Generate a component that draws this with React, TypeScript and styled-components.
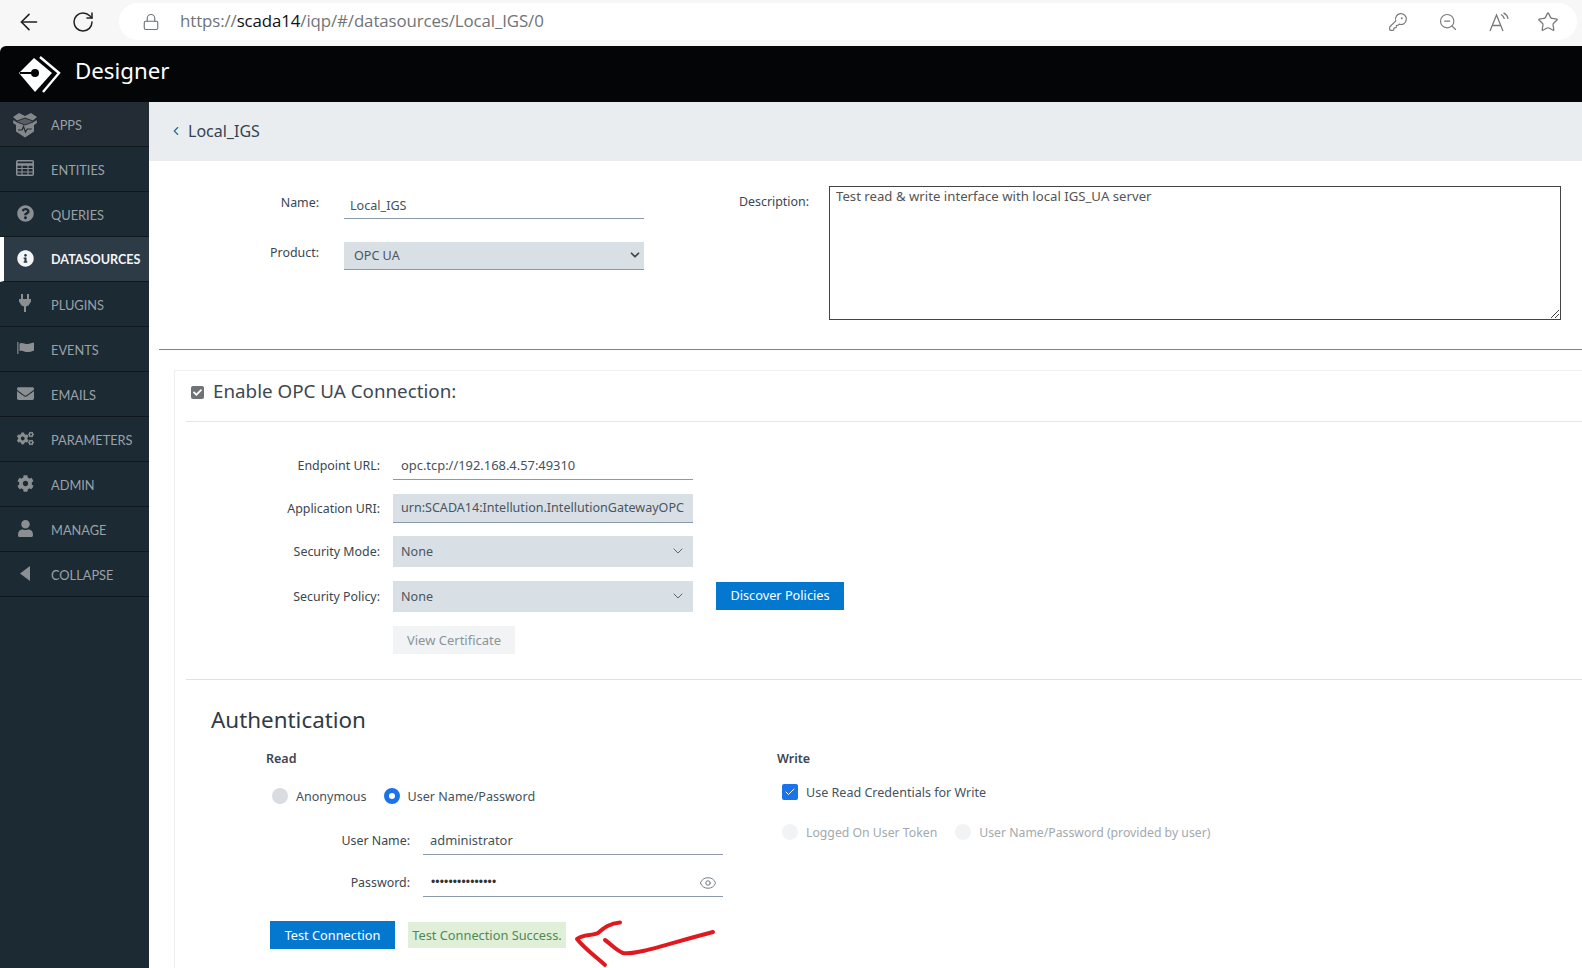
import React from "react";
import styled, { createGlobalStyle } from "styled-components";
import { FaQuestionCircle, FaInfoCircle, FaEnvelope, FaCogs, FaCog, FaUser, FaCheck } from "react-icons/fa";
import { ArrowLeft, RotateCw, Lock, KeyRound, ZoomOut, Star, ChevronDown, ChevronLeft, Eye, Check } from "lucide-react";

const Global = createGlobalStyle`
  html, body { margin: 0; padding: 0; width: 1582px; height: 968px; overflow: hidden; background: #fff; }
  body { font-family: "Noto Sans", "Open Sans", sans-serif; color: #333; }
  * { box-sizing: border-box; }
`;

const Page = styled.div`
  width: 1582px; height: 968px; display: flex; flex-direction: column; overflow: hidden; background: #f7f7f7;
`;
const BrowserBar = styled.div`
  height: 46px; flex: none; display: flex; align-items: flex-start; padding: 3px 5px 0 0; background: #f7f7f7;
`;
const NavButton = styled.div<{ $w: number }>`
  width: ${p => p.$w}px; height: 37px; flex: none; display: flex; align-items: center; justify-content: center; color: #222;
`;
const AddressPill = styled.div`
  flex: 1; height: 37px; border-radius: 19px; background: #fff; display: flex; align-items: center; padding: 0 18px 0 23px; color: #6d7278;
`;
const UrlText = styled.div`
  flex: 1; margin-left: 20px; margin-top: -2px; font-family: "Open Sans", sans-serif; font-size: 16.85px; color: #6f7479; white-space: nowrap; letter-spacing: -0.1px;
  b { font-weight: 400; color: #111; }
`;
const PillIcons = styled.div`
  display: flex; align-items: center; gap: 30px; color: #7a7a7a;
`;
const ReadAloud = styled.svg`
  width: 22px; height: 20px; display: block;
`;
const StarSlot = styled.span`
  display: flex; margin-left: -3px;
`;
const Shell = styled.div`
  flex: 1; min-height: 0; display: flex; flex-direction: column; background: #fff; border-top-left-radius: 6px; overflow: hidden;
`;
const Header = styled.header`
  height: 56px; flex: none; background: #030507; display: flex; align-items: center; padding-left: 18px; gap: 13px; color: #fff;
`;
const Brand = styled.span`
  font-size: 22.3px; font-family: "Noto Sans", sans-serif; margin-bottom: 8px;
`;
const Logo = styled.svg`
  width: 44px; height: 38px; display: block; flex: none; margin-top: 2px;
`;
const Body = styled.div`
  flex: 1; min-height: 0; display: flex;
`;
const Sidebar = styled.nav`
  width: 149px; flex: none; background: #1c2a34; display: flex; flex-direction: column;
`;
const NavItem = styled.div<{ $active?: boolean; $top?: boolean }>`
  height: 45px; flex: none; display: flex; align-items: center; padding-top: 1px; padding-left: ${p => (p.$active ? 11 : 15)}px;
  border-left: ${p => (p.$active ? "4px solid #fff" : "none")};
  border-bottom: 1px solid #10181e;
  background: ${p => (p.$active ? "#2d3b47" : p.$top ? "#232c34" : "#1c2a34")};
  color: ${p => (p.$active ? "#f2f4f6" : "#9aa2a8")};
  font-family: Lato, sans-serif; font-size: ${p => (p.$active ? 12.6 : 12.8)}px; font-weight: ${p => (p.$active ? 700 : 400)};
`;
const NavIcon = styled.span<{ $active?: boolean }>`
  width: 20px; height: 20px; flex: none; margin-right: 16px; display: flex; align-items: center; justify-content: center;
  color: ${p => (p.$active ? "#f2f4f6" : "#8b8f92")}; font-size: 17px; margin-top: -3px;
`;
const IconSvg = styled.svg<{ $w: number; $h: number; $mt?: number }>`
  width: ${p => p.$w}px; height: ${p => p.$h}px; flex: none; display: block; margin-top: ${p => p.$mt ?? 0}px;
`;
const Main = styled.main`
  flex: 1; min-width: 0; display: flex; flex-direction: column; background: #fff;
`;
const Crumb = styled.div`
  height: 59px; flex: none; background: #e9edf0; display: flex; align-items: center; padding: 0 0 2px 20px; gap: 5px; color: #33434f; font-size: 16px;
  svg { color: #1f6d93; }
`;
const TopForm = styled.section`
  height: 188px; flex: none; display: flex; padding-top: 27px;
`;
const TopLeft = styled.div`
  width: 495px; flex: none; display: flex; flex-direction: column;
`;
const TopRow = styled.div<{ $gap?: number }>`
  display: flex; align-items: flex-start; margin-top: ${p => p.$gap ?? 0}px;
`;
const Label = styled.label<{ $w: number; $nudge?: number }>`
  width: ${p => p.$w}px; flex: none; text-align: right; font-size: 12.4px; color: #3a4650; white-space: nowrap; padding-top: ${p => p.$nudge ?? 0}px;
`;
const UnderInput = styled.div<{ $w?: number; $ml?: number; $h?: number; $size?: number; $pt?: number; $pl?: number }>`
  width: ${p => p.$w ?? 300}px; margin-left: ${p => p.$ml ?? 0}px; height: ${p => p.$h ?? 30}px; flex: none; display: flex; align-items: center;
  padding: ${p => p.$pt ?? 0}px 7px 0 ${p => p.$pl ?? 7}px; border-bottom: 1px solid #8a9aa8; font-size: ${p => p.$size ?? 12.9}px; color: #45525c; background: #fff; position: relative;
`;
const SelectBox = styled.div<{ $w?: number; $ml?: number; $h: number; $line?: boolean; $pl?: number; $pr?: number; $pb?: number; $size?: number }>`
  width: ${p => p.$w ?? 300}px; margin-left: ${p => p.$ml ?? 0}px; height: ${p => p.$h}px; flex: none; display: flex; align-items: center; justify-content: space-between;
  padding: 0 ${p => p.$pr ?? 7}px ${p => p.$pb ?? 1}px ${p => p.$pl ?? 8}px; background: #d8dfe5; font-size: ${p => p.$size ?? 12.55}px; color: #4a5660; white-space: nowrap;
  border-bottom: ${p => (p.$line ? "1px solid #8a9aa8" : "none")};
`;
const DescWrap = styled.div`
  display: flex; align-items: flex-start; margin-top: -2px;
`;
const TextBox = styled.div`
  width: 732px; height: 134px; margin-left: 20px; border: 1px solid #444; padding: 0 6px; font-size: 13.2px; line-height: 18px; color: #555; flex: none; position: relative;
`;
const Grip = styled.svg`
  position: absolute; right: 1px; bottom: 1px; width: 9px; height: 9px;
`;
const Rule = styled.hr`
  margin: 0 0 0 10px; height: 1px; border: 0; background: #7f8386; flex: none;
`;
const Card = styled.section`
  flex: 1; margin: 20px -10px 0 25px; border: 1px solid #eceef0; border-bottom: 0; background: #fff; padding: 0 0 0 11px; display: flex; flex-direction: column; min-height: 0;
`;
const EnableRow = styled.div`
  height: 51px; flex: none; display: flex; align-items: center; gap: 9px; padding: 0 0 7px 5px; border-bottom: 1px solid #e3e6e8;
  font-size: 18.8px; color: #3c4852;
`;
const EnableText = styled.span`
  margin-bottom: 3px;
`;
const GreyCheck = styled.span`
  width: 13px; height: 13px; border-radius: 2px; background: #6f7376; flex: none; display: flex; align-items: center; justify-content: center; color: #fff; font-size: 9px;
`;
const Connection = styled.div`
  height: 258px; flex: none; padding-top: 28px; border-bottom: 1px solid #dfe2e4; display: flex; flex-direction: column;
`;
const FieldRow = styled.div<{ $mt?: number }>`
  display: flex; align-items: center; margin-top: ${p => p.$mt ?? 0}px;
`;
const BlueButton = styled.div<{ $w: number; $h: number; $ml?: number; $mt?: number; $pb?: number }>`
  width: ${p => p.$w}px; height: ${p => p.$h}px; margin-left: ${p => p.$ml ?? 0}px; margin-top: ${p => p.$mt ?? 0}px; flex: none; background: #0477cf; color: #fff; font-size: 12.75px;
  display: flex; align-items: center; justify-content: center; padding-bottom: ${p => p.$pb ?? 1}px;
`;
const GhostButton = styled.div`
  width: 122px; height: 28px; margin: 14px 0 0 207px; padding-bottom: 1px; background: #f1f3f4; color: #8c949a; font-size: 13px; display: flex; align-items: center; justify-content: center;
`;
const AuthTitle = styled.h2`
  margin: 0; padding: 25px 0 0 25px; font-size: 22.4px; line-height: 30px; font-weight: 400; color: #2f3b45;
`;
const Columns = styled.div`
  display: flex; margin-top: 15px;
`;
const ReadCol = styled.div`
  width: 591px; flex: none; padding-left: 80px; position: relative;
`;
const WriteCol = styled.div`
  flex: 1; min-width: 0;
`;
const SubHead = styled.div`
  font-size: 12.5px; line-height: 18px; font-weight: 600; color: #3a4650;
`;
const RadioRow = styled.div<{ $ml?: number; $mt?: number }>`
  display: flex; align-items: center; margin-left: ${p => p.$ml ?? 0}px; margin-top: ${p => p.$mt ?? 0}px; height: 16px;
`;
const Radio = styled.span<{ $on?: boolean; $faint?: boolean; $ml?: number }>`
  width: 16px; height: 16px; border-radius: 50%; flex: none; margin-left: ${p => p.$ml ?? 0}px;
  background: ${p => (p.$on ? "#fff" : p.$faint ? "#f2f3f5" : "#d9dde2")};
  border: ${p => (p.$on ? "5px solid #1a73e8" : "none")};
`;
const Option = styled.span<{ $faint?: boolean }>`
  margin-left: 8px; font-size: ${p => (p.$faint ? 12.25 : 12.55)}px; color: ${p => (p.$faint ? "#a3a9ae" : "#46525c")}; white-space: nowrap;
`;
const BlueCheck = styled.span`
  width: 16px; height: 16px; border-radius: 2px; background: #1a73e8; color: #fff; display: flex; align-items: center; justify-content: center; flex: none;
`;
const EyeBtn = styled.span`
  position: absolute; right: 6px; top: 7px; color: #6e7a84; display: flex;
`;
const Dots = styled.span`
  font-size: 12px; letter-spacing: 0.15px; color: #333; font-family: "Liberation Sans", sans-serif; margin-left: 1px;
`;
const ActionRow = styled.div`
  display: flex; align-items: center; margin: 24px 0 0 -80px; padding-left: 84px; position: relative;
`;
const Success = styled.div`
  width: 158px; height: 26px; margin-left: 13px; background: #e0efd8; color: #4f8a55; font-size: 12.8px; display: flex; align-items: center; justify-content: center; white-space: nowrap;
`;
const Arrow = styled.svg`
  position: absolute; left: 384px; top: -11px; width: 160px; height: 58px; overflow: visible;
`;

const AppsIcon = () => (
  <IconSvg $w={26} $h={26} $mt={4} viewBox="0 0 26 26" fill="#85888a">
    <path d="M7 1 13 4 19 1 25 5 21 8.5 13 5.5 5 8.5 1 5Z" />
    <path d="M5 9.5 13 6.5 21 9.5 13 12.5Z" fill="#85888a" opacity=".55" />
    <path d="M1.5 8 5 10.5 13 13.5 21 10.5 24.5 8 25 11 22 13V19.5L13 25.5 4 19.5V13L1 11Z" />
    <path d="M6 18h4l1.5-3.5 2 5.5 1.8-3h4.5" fill="none" stroke="#232c34" strokeWidth="1.2" />
  </IconSvg>
);
const TableIcon = () => (
  <IconSvg $w={18} $h={16} viewBox="0 0 18 16" fill="none" stroke="currentColor">
    <rect x="0.75" y="0.75" width="16.5" height="14.5" rx="1" strokeWidth="1.5" />
    <path d="M0 4.5h18" strokeWidth="2.6" />
    <path d="M0 8.5h18M0 12h18M6 4v12M12 4v12" strokeWidth="1.1" />
  </IconSvg>
);
const PlugIcon = () => (
  <IconSvg $w={12} $h={18} viewBox="0 0 12 18" fill="currentColor">
    <rect x="2" y="0" width="2" height="5" />
    <rect x="8" y="0" width="2" height="5" />
    <path d="M0 5h12v2.5L9.5 11.5 7 12.5V18H5V12.5L2.5 11.5 0 7.5Z" />
  </IconSvg>
);
const FlagIcon = () => (
  <IconSvg $w={17} $h={12} viewBox="0 0 17 12" fill="currentColor">
    <rect x="0" y="0" width="1.6" height="12" opacity=".7" />
    <path d="M2.5 1.5C5.5-.2 8 2.6 11 2 12.8 1.7 15 1 17 .5V8.5C14.5 9.5 12.5 10 10.5 10 7.5 10 5.5 7.8 2.5 9Z" />
  </IconSvg>
);
const CollapseIcon = () => (
  <IconSvg $w={10} $h={15} viewBox="0 0 10 15" fill="currentColor">
    <path d="M10 0V15L0 7.5Z" />
  </IconSvg>
);

const items: { key: string; icon: React.ReactNode }[] = [
  { key: "APPS", icon: <AppsIcon /> },
  { key: "ENTITIES", icon: <TableIcon /> },
  { key: "QUERIES", icon: <FaQuestionCircle /> },
  { key: "DATASOURCES", icon: <FaInfoCircle /> },
  { key: "PLUGINS", icon: <PlugIcon /> },
  { key: "EVENTS", icon: <FlagIcon /> },
  { key: "EMAILS", icon: <FaEnvelope /> },
  { key: "PARAMETERS", icon: <FaCogs /> },
  { key: "ADMIN", icon: <FaCog /> },
  { key: "MANAGE", icon: <FaUser /> },
  { key: "COLLAPSE", icon: <CollapseIcon /> },
];

export default function App() {
  return (
    <Page>
      <Global />
      <BrowserBar>
        <NavButton $w={58}><ArrowLeft size={26} strokeWidth={1.5} /></NavButton>
        <NavButton $w={50}><RotateCw size={24} strokeWidth={1.5} /></NavButton>
        <NavButton $w={11} />
        <AddressPill>
          <Lock size={18} strokeWidth={1.5} />
          <UrlText>https://<b>scada14</b>/iqp/#/datasources/Local_IGS/0</UrlText>
          <PillIcons>
            <KeyRound size={20} strokeWidth={1.4} />
            <ZoomOut size={20} strokeWidth={1.4} />
            <ReadAloud viewBox="0 0 22 20" fill="none" stroke="currentColor" strokeWidth="1.3">
              <path d="M2 19 8.5 3 15 19M4.5 13.5h8" />
              <path d="M13 2.5c2 1 3 2.4 3.4 4.5M15.5.8c2.5 1.2 4 3.2 4.6 6" />
            </ReadAloud>
            <StarSlot><Star size={22} strokeWidth={1.4} /></StarSlot>
          </PillIcons>
        </AddressPill>
      </BrowserBar>
      <Shell>
        <Header>
          <Logo viewBox="0 0 44 38">
            <path d="M16 2 34 17 17 36 1 17Z" fill="#fff" />
            <path d="M2 17h13" stroke="#030507" strokeWidth="2.2" />
            <circle cx="17" cy="17" r="4" fill="#030507" />
            <path d="M22 1 41 17 25 36" stroke="#fff" strokeWidth="2.4" fill="none" />
          </Logo>
          <Brand>Designer</Brand>
        </Header>
        <Body>
          <Sidebar>
            {items.map((it, i) => (
              <NavItem key={it.key} $active={it.key === "DATASOURCES"} $top={i === 0}>
                <NavIcon $active={it.key === "DATASOURCES"}>{it.icon}</NavIcon>
                {it.key}
              </NavItem>
            ))}
          </Sidebar>
          <Main>
            <Crumb><ChevronLeft size={14} strokeWidth={2} />Local_IGS</Crumb>
            <TopForm>
              <TopLeft>
                <TopRow>
                  <Label $w={170} $nudge={6}>Name:</Label>
                  <UnderInput $ml={25} $h={31} $size={12.6} $pt={4} $pl={6}>Local_IGS</UnderInput>
                </TopRow>
                <TopRow $gap={23}>
                  <Label $w={170} $nudge={2}>Product:</Label>
                  <SelectBox $ml={25} $h={28} $line $pl={10} $pr={2}>OPC UA<ChevronDown size={14} strokeWidth={3} color="#444" /></SelectBox>
                </TopRow>
              </TopLeft>
              <DescWrap>
                <Label $w={165} $nudge={7}>Description:</Label>
                <TextBox>
                  Test read &amp; write interface with local IGS_UA server
                  <Grip viewBox="0 0 9 9" stroke="#444" strokeWidth="1"><path d="M1 9 9 1M5 9 9 5" /></Grip>
                </TextBox>
              </DescWrap>
            </TopForm>
            <Rule />
            <Card>
              <EnableRow>
                <GreyCheck><FaCheck /></GreyCheck>
                <EnableText>Enable OPC UA Connection:</EnableText>
              </EnableRow>
              <Connection>
                <FieldRow>
                  <Label $w={194}>Endpoint URL:</Label>
                  <UnderInput $ml={13} $h={30} $pt={1} $pl={8}>opc.tcp://192.168.4.57:49310</UnderInput>
                </FieldRow>
                <FieldRow $mt={14}>
                  <Label $w={194}>Application URI:</Label>
                  <SelectBox $ml={13} $h={29} $line $pb={2}>urn:SCADA14:Intellution.IntellutionGatewayOPC</SelectBox>
                </FieldRow>
                <FieldRow $mt={13}>
                  <Label $w={194}>Security Mode:</Label>
                  <SelectBox $ml={13} $h={31}>None<ChevronDown size={16} strokeWidth={1.5} color="#5b6770" /></SelectBox>
                </FieldRow>
                <FieldRow $mt={14}>
                  <Label $w={194}>Security Policy:</Label>
                  <SelectBox $ml={13} $h={31}>None<ChevronDown size={16} strokeWidth={1.5} color="#5b6770" /></SelectBox>
                  <BlueButton $w={128} $h={28} $ml={23} $mt={-1} $pb={2}>Discover Policies</BlueButton>
                </FieldRow>
                <GhostButton>View Certificate</GhostButton>
              </Connection>
              <AuthTitle>Authentication</AuthTitle>
              <Columns>
                <ReadCol>
                  <SubHead>Read</SubHead>
                  <RadioRow $ml={6} $mt={20}>
                    <Radio />
                    <Option>Anonymous</Option>
                    <Radio $on $ml={17} />
                    <Option>User Name/Password</Option>
                  </RadioRow>
                  <FieldRow $mt={21}>
                    <Label $w={144}>User Name:</Label>
                    <UnderInput $ml={13} $h={30}>administrator</UnderInput>
                  </FieldRow>
                  <FieldRow $mt={12}>
                    <Label $w={144}>Password:</Label>
                    <UnderInput $ml={13} $h={30}>
                      <Dots>•••••••••••••••</Dots>
                      <EyeBtn><Eye size={18} strokeWidth={1.3} /></EyeBtn>
                    </UnderInput>
                  </FieldRow>
                  <ActionRow>
                    <BlueButton $w={125} $h={28}>Test Connection</BlueButton>
                    <Success>Test Connection Success.</Success>
                    <Arrow viewBox="0 0 160 58" fill="none" stroke="#e0191f" strokeWidth="4" strokeLinecap="round" strokeLinejoin="round">
                      <path d="M50 12.5C40 13 34 18 28 23 22 26 13 24 7 29 15 39 25 46 35 55" />
                      <path d="M35 30C42 35 47 41 53 43 C68 45 100 33 143 22" />
                    </Arrow>
                  </ActionRow>
                </ReadCol>
                <WriteCol>
                  <SubHead>Write</SubHead>
                  <RadioRow $ml={5} $mt={16}>
                    <BlueCheck><Check size={12} strokeWidth={2} /></BlueCheck>
                    <Option>Use Read Credentials for Write</Option>
                  </RadioRow>
                  <RadioRow $ml={5} $mt={24}>
                    <Radio $faint />
                    <Option $faint>Logged On User Token</Option>
                    <Radio $faint $ml={18} />
                    <Option $faint>User Name/Password (provided by user)</Option>
                  </RadioRow>
                </WriteCol>
              </Columns>
            </Card>
          </Main>
        </Body>
      </Shell>
    </Page>
  );
}
